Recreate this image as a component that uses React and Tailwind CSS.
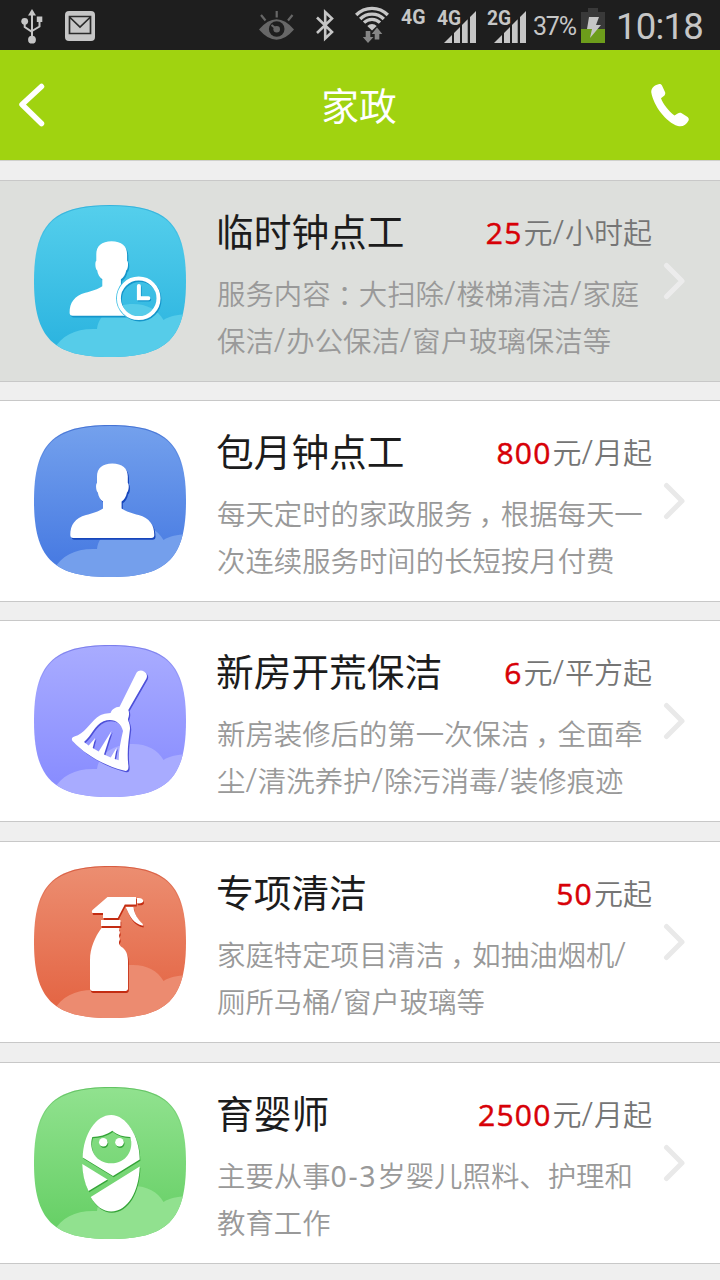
import React from "react";

// Silhouettes are drawn in a 200x200 box and shifted onto the tile
const personPath =
  "M92.300 53.500c-10 0-15.300 5-15.300 13v6.500c-1.500 1-1.200 8 .8 9.500c.8 4.500 2.500 7 5.200 9v7c-4 3-11 5-17 6.500c-11 3-15.700 10-15.700 20c0 2 1 3 3 3h78c2 0 3-1 3-3c0-10-4.700-17-15.700-20c-6-1.500-13-3.500-17-6.500v-7c2.700-2 4.500-4.500 5.400-9c2-1.500 2.300-8.500.8-9.500v-6.500c0-8-5.500-13-15.500-13z";

const Person = ({ shadow }) => (
  <>
    <path d={personPath} fill={shadow} transform="translate(1.200 1.800)" />
    <path d={personPath} fill="#fff" />
  </>
);

const PersonClock = ({ shadow }) => (
  <>
    <mask id="clock-cut">
      <path d="M0 0h200v200H0z" fill="#fff" />
      <circle cx="118.700" cy="108.300" r="22.600" fill="#000" />
      <path d="M118 95h30v40h-30z" fill="#000" />
    </mask>
    <g mask="url(#clock-cut)">
      <g transform="translate(-.7 -2.200)">
        <Person shadow={shadow} />
      </g>
    </g>
    <circle cx="119.700" cy="109.700" r="19.800" fill="none" stroke={shadow} strokeWidth="4" />
    <circle cx="118.700" cy="108.300" r="19.800" fill="none" stroke="#fff" strokeWidth="4" />
    <path d="M119.700 97.300v12.300h9.500" fill="none" stroke={shadow} strokeWidth="4" strokeLinecap="round" />
    <path d="M118.900 96v12.300h9.500" fill="none" stroke="#fff" strokeWidth="4" strokeLinecap="round" />
  </>
);

const broomPath =
  "M116.500 42.800c1.800-2.600 5-2.800 7.500-1.400c2.800 1.600 3.700 4.200 2.400 7L108.300 80c1.200 2.700.9 5.500-.3 9c-.2 2 2.300 4.500 2 10c-1.500 12-3.300 24-1.600 36.800c.3 4.500-1.200 5.800-4.500 4.800C84.500 135.500 66 125.500 52.700 111.300c-1.700-2-.7-4 1.700-4.700c10-2.500 15-13 22.500-19c4-3.300 8-4.200 13.700-4.600c1.200-3.600 4.400-6 9-6.300z" +
  "M83.500 91.300c-9 4-11.500 14-19.500 20.700l4.700 3.500l6.500-7.500l-2.500 10l6 3.500l12.800-20.500l-7.500 23.500l6.700 3l6-10l-2 11.500l4 1.300c0-10.500 2.300-20.500 4.300-29.300c-2-8-9.500-13.500-19.500-9.700z";

const Broom = ({ shadow }) => (
  <>
    <path fillRule="evenodd" d={broomPath} fill={shadow} transform="translate(1.200 1.300)" />
    <path fillRule="evenodd" d={broomPath} fill="#fff" />
  </>
);

const Spray = ({ shadow }) => {
  const shapes = (
    <>
      <path d="M67.500 47h28.500v7.500H84.800l-7 13.500H63v-5H52.500c-1-1-.7-2 0-3zM97 48c3.500-.5 6 .5 6.200 3c0 2-2.700 2.700-6.200 2.300zM85.800 57h7.500c1.500 7.500 4.500 12.500 9.500 17v1.700c-9-1.700-13.500-9.500-17-18.700z" />
      <path d="M61 70h19.500v6H61zM61.500 78h18c-1.500 2.500 1.500 3.500 0 6c-1.500 3 1.500 4 0 6.500c-1.500 3 .5 5.500 3 7c4.500 3.500 5.500 8.500 5.500 13.500v27.500c0 1.500-1 2.500-2.500 2.500H52.500c-1.500 0-2.500-1-2.500-2.500V110c0-12 5-23 11.500-32z" />
    </>
  );
  return (
    <g transform="translate(20 -1)">
      <g fill={shadow} transform="translate(.8 1.900)">{shapes}</g>
      <g fill="#fff">{shapes}</g>
    </g>
  );
};

const Baby = ({ shadow }) => {
  const shapes = (
    <>
      <path
        fillRule="evenodd"
        d="M91.200 45c15 0 28.500 21 28.500 44.500L93 106L62.700 87.500C63.500 64 76 45 91.200 45zM92.300 60.700c-6 4.300-13 6-20 6.300c-4 13 4 26.300 19 26.300s23-13.300 19-26.300c-7-.300-13-2-18-6.300z"
      />
      <path d="M62.300 94L87.500 109.500L68.500 121C64.500 113 62.500 103.500 62.300 94zM119.700 96.500c-.500 25-12 45-28.500 45c-8 0-15.500-5.500-20.500-14.500z" />
      <circle cx="83.300" cy="72.300" r="4.300" />
      <circle cx="99.500" cy="72.300" r="4.300" />
    </>
  );
  return (
    <g transform="translate(0 -2)">
      <g fill={shadow} transform="translate(.7 1.300)">{shapes}</g>
      <g fill="#fff">{shapes}</g>
    </g>
  );
};

const services = [
  {
    id: "hourly",
    title: "临时钟点工",
    price: "25",
    unit: "元/小时起",
    lines: ["服务内容：大扫除/楼梯清洁/家庭", "保洁/办公保洁/窗户玻璃保洁等"],
    icon: PersonClock,
    colors: ["#55cfec", "#2db5e0", "#56cce9", "#1596cb"],
    rowClass: "bg-[#dddfdc]",
    arrow: "#ececec",
  },
  {
    id: "monthly",
    title: "包月钟点工",
    price: "800",
    unit: "元/月起",
    lines: ["每天定时的家政服务，根据每天一", "次连续服务时间的长短按月付费"],
    icon: Person,
    colors: ["#74a1ed", "#487be2", "#749fec", "#1746bb"],
    rowClass: "bg-white mt-[18px]",
    arrow: "#e9e9e9",
  },
  {
    id: "newhouse",
    title: "新房开荒保洁",
    price: "6",
    unit: "元/平方起",
    lines: ["新房装修后的第一次保洁，全面牵", "尘/清洗养护/除污消毒/装修痕迹"],
    icon: Broom,
    colors: ["#a9acff", "#898dff", "#a8abff", "#4d50d8"],
    rowClass: "bg-white mt-[18px]",
    arrow: "#e9e9e9",
  },
  {
    id: "special",
    title: "专项清洁",
    price: "50",
    unit: "元起",
    lines: ["家庭特定项目清洁，如抽油烟机/", "厕所马桶/窗户玻璃等"],
    icon: Spray,
    colors: ["#ec8e71", "#e46645", "#ec8b70", "#c32c12"],
    rowClass: "bg-white mt-[19px]",
    arrow: "#e9e9e9",
  },
  {
    id: "baby",
    title: "育婴师",
    price: "2500",
    unit: "元/月起",
    lines: ["主要从事0-3岁婴儿照料、护理和", "教育工作"],
    icon: Baby,
    colors: ["#91e28f", "#68d067", "#91e18f", "#35a438"],
    rowClass: "bg-white mt-[19px]",
    arrow: "#e9e9e9",
  },
];

// Latin characters and punctuation get their own face and spacing inside Chinese text
const Mixed = ({ text }) =>
  text.split(/([/，：]|[0-9-]+)/).map((part, i) => {
    if (part === "/") {
      return (
        <span key={i} className="pr-[1px] font-['Noto_Sans'] text-[33px] leading-none">
          /
        </span>
      );
    }
    if (part === "：") {
      return <span key={i} className="px-[7px] [font-feature-settings:'halt']">{part}</span>;
    }
    if (part === "，") {
      return <span key={i} className="pr-[8px] pl-[6px] [font-feature-settings:'halt']">{part}</span>;
    }
    if (/^[0-9-]+$/.test(part)) {
      return <span key={i} className="font-['Noto_Sans'] font-normal tracking-[1.7px]">{part}</span>;
    }
    return part;
  });

const tilePath =
  "M76 0C133 0 152 19 152 76S133 152 76 152S0 133 0 76S19 0 76 0Z";

const Tile = ({ id, colors, icon: Icon }) => (
  <svg className="h-[152px] w-[152px] shrink-0" viewBox="0 0 152 152">
    <defs>
      <linearGradient id={`bg-${id}`} x1="0" y1="0" x2="0" y2="1">
        <stop offset="0" stopColor={colors[0]} />
        <stop offset=".9" stopColor={colors[1]} />
      </linearGradient>
      <linearGradient id={`edge-${id}`} x1="0" y1="0" x2="0" y2="1">
        <stop offset="0" stopColor={colors[3]} stopOpacity=".5" />
        <stop offset=".3" stopColor={colors[3]} stopOpacity="0" />
      </linearGradient>
      <clipPath id={`clip-${id}`}>
        <path d={tilePath} />
      </clipPath>
    </defs>
    <g clipPath={`url(#clip-${id})`}>
      <path d="M0 0h152v152H0z" fill={`url(#bg-${id})`} />
      <path
        d="M20 144C28 130 42 123 63 124C65 108 81 99 99 99C113 99 124 105 129.500 115C136 111 143 109.500 152 109.500V152H19z"
        fill={colors[2]}
      />
      <path d={tilePath} fill="none" stroke={`url(#edge-${id})`} strokeWidth="2" />
      <g transform="translate(-14 -15)">
        <Icon shadow={colors[3]} />
      </g>
    </g>
  </svg>
);

const ServiceRow = ({ service }) => (
  <li className={`flex h-[202px] border-y border-[#c8c8c8] pt-6 pl-[34px] ${service.rowClass}`}>
    <Tile id={service.id} colors={service.colors} icon={service.icon} />
    <div className="ml-[30px] w-[436px] shrink-0">
      <div className="flex h-[54px] items-start justify-between">
        <h2 className="text-[37.7px] leading-[50px] text-[#1c1c1c]">{service.title}</h2>
        <p className="text-[29px] leading-[52px] font-[350] whitespace-nowrap text-[#757575]">
          <span className="pr-[1px] font-['Open_Sans'] text-[30px] font-medium tracking-[1.2px] text-[#d70007] [-webkit-text-stroke:0.5px_#d70007]">
            {service.price}
          </span>
          <Mixed text={service.unit} />
        </p>
      </div>
      <div className="mt-[10px] ml-[1px] text-[28.4px] leading-[47px] font-[350] whitespace-nowrap text-[#999]">
        {service.lines.map((line) => (
          <p key={line} className="h-[47px]">
            <Mixed text={line} />
          </p>
        ))}
      </div>
    </div>
    <svg className="mt-[57px] ml-[10px] h-[38px] w-6" viewBox="0 0 24 38" fill="none">
      <path d="M4.500 3.500L20 19L4.500 34.500" stroke={service.arrow} strokeWidth="5" strokeLinecap="round" strokeLinejoin="round" />
    </svg>
  </li>
);

const Signal = ({ label }) => (
  <svg className="h-[50px] w-10" viewBox="0 0 40 50">
    <path
      d="M7 43l8-8v8zM17 43V33l6-6V43zM25 43V25l5.700-5.700V43zM33 43V17l6-6V43z"
      fill="#c6c6c6"
    />
    <text x="0" y="25" fontSize="20" fontWeight="700" fontFamily="Roboto" fill="#c6c6c6" stroke="#1e1e1e" strokeWidth="3" paintOrder="stroke" textLength="24" lengthAdjust="spacingAndGlyphs">
      {label}
    </text>
  </svg>
);

const StatusBar = () => (
  <div className="flex h-[50px] items-center bg-[#1e1e1e] font-[Roboto] text-[#c6c6c6]">
    {/* USB */}
    <svg className="ml-5 h-[50px] w-6 shrink-0" viewBox="0 0 24 50" fill="#c6c6c6">
      <path d="M12 9l4 6.500H8z" />
      <path d="M12 14v26M4.700 22v5l7.300 4.800M19.500 20v6.500L12 31" fill="none" stroke="#c6c6c6" strokeWidth="2" />
      <circle cx="4.700" cy="21.300" r="3.400" />
      <path d="M16.800 16.500h5.500V22h-5.500z" />
      <circle cx="12" cy="39.700" r="3.900" />
    </svg>
    {/* Mail */}
    <svg className="ml-[21px] h-[50px] w-[30px] shrink-0" viewBox="0 0 30 50">
      <rect y="11" width="30" height="30" rx="4" fill="#c6c6c6" />
      <path d="M4.500 16.500h21v17h-21zM4.500 17L15 27L25.500 17" fill="none" stroke="#2a2a2a" strokeWidth="1.700" />
    </svg>
    {/* Smart stay eye */}
    <svg className="ml-[164px] h-[50px] w-9 shrink-0" viewBox="0 0 36 50">
      <path d="M0 29.500Q17.500 9 35 29.500Q17.500 50 0 29.500z" fill="#676767" />
      <circle cx="17.700" cy="29" r="7.800" fill="#1e1e1e" />
      <circle cx="17.700" cy="29.300" r="3.300" fill="#676767" />
      <path d="M12.500 25l5 4M2 15l4.500 5.500M17.700 11v6.500M33.500 15l-4.500 5.500" stroke="#676767" strokeWidth="2.200" />
    </svg>
    {/* Bluetooth */}
    <svg className="ml-[20px] h-[50px] w-5 shrink-0" viewBox="0 0 20 50" fill="none">
      <path d="M2 17.500L17 32L10.200 38.500V12L17 18.500L2 33" stroke="#c6c6c6" strokeWidth="2.600" />
    </svg>
    {/* Wifi with traffic arrows */}
    <svg className="ml-[20px] h-[50px] w-9 shrink-0" viewBox="0 0 36 50" fill="none">
      <path
        d="M1.200 15A22 22 0 0 1 32.800 15M5.200 19A16.500 16.500 0 0 1 28.800 19M9 22.700A11.300 11.300 0 0 1 25 22.700"
        stroke="#c6c6c6"
        strokeWidth="3.300"
      />
      <path d="M12.300 25.900A6.600 6.600 0 0 1 21.700 25.900L17 30.500z" fill="#c6c6c6" />
      <path d="M10.700 31h4.600v6h3.200L13 43l-5.200-6h2.900zM19.700 39.500V34h-3l5.300-6.500l5.300 6.500h-3v5.500z" fill="#858585" />
    </svg>
    <svg className="ml-[10px] h-[50px] w-[27px] shrink-0" viewBox="0 0 27 50">
      <text x="0" y="23.500" fontSize="19.500" fontWeight="700" fontFamily="Roboto" fill="#c6c6c6">4G</text>
    </svg>
    <div className="ml-[9px] flex gap-[10px]">
      <Signal label="4G" />
      <Signal label="2G" />
    </div>
    <span className="ml-[6px] w-[45px] pt-[3px] text-[25px] leading-none tracking-[-1.2px]">37%</span>
    {/* Battery */}
    <svg className="ml-[3px] h-[50px] w-6 shrink-0" viewBox="0 0 24 50">
      <path d="M7 8h10v4h7v17H0V12h7z" fill="#393939" />
      <path d="M0 29h24v14H0z" fill="#6d9d1b" />
      <path d="M8 17h10l-3 8h5L9 38l2-9H6z" fill="#c6c6c6" />
    </svg>
    <span className="ml-[11px] pt-[5px] text-[36.5px] leading-none tracking-[-0.8px] whitespace-nowrap">10:18</span>
  </div>
);

const Header = () => (
  <header className="flex h-[111px] items-center justify-between border-b border-[#cfd0cc] bg-[#a0d310] pr-[30px] pl-[18px]">
    <svg className="h-11 w-7" viewBox="0 0 28 44" fill="none">
      <path d="M23.500 3.500L4 21.500L23.500 40.500" stroke="#fff" strokeWidth="5.500" strokeLinecap="round" strokeLinejoin="round" />
    </svg>
    <h1 className="pb-[2px] pl-[22px] text-[37.7px] leading-[54px] text-white">家政</h1>
    <svg className="h-11 w-10" viewBox="0 0 40 44">
      <path
        d="M8.500 1.200c1.500-.5 3 0 3.600 1.500l3 6.600c.5 1.500-.2 3-1.600 4l-2.500 2C13 21 18.500 28 24.500 32.500l3.200-2c1.300-.8 2.700-1 4-.2l5.500 3.500c1.500 1 2 2.500 1.200 4c-2 4-6 6.500-10.500 5.200C16 39.500 3.500 22.500 1.300 9.500C.8 5.500 4 2.200 8.500 1.200z"
        fill="#fff"
      />
    </svg>
  </header>
);

export default function App() {
  return (
    <div className="h-[1280px] w-[720px] overflow-hidden bg-[#efefef] font-['Noto_Sans_CJK_SC',sans-serif]">
      <StatusBar />
      <Header />
      <ul className="pt-[19px]">
        {services.map((service) => (
          <ServiceRow key={service.id} service={service} />
        ))}
      </ul>
    </div>
  );
}
